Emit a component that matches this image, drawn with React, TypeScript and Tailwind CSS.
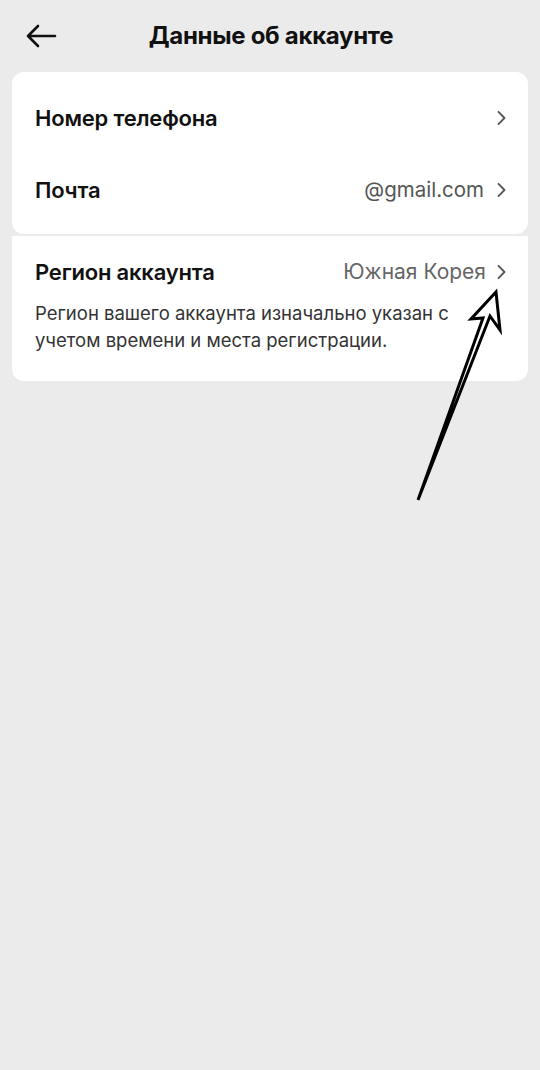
import React from "react";

const Chevron = () => (
  <svg width="12" height="16" viewBox="0 0 12 16" fill="none" className="shrink-0">
    <path d="M3.5 1.8 L9.5 8 L3.5 14.2" stroke="#555" strokeWidth="1.8" strokeLinecap="round" strokeLinejoin="round" />
  </svg>
);

export default function App() {
  return (
    <div className="relative w-[540px] h-[1070px] bg-[#ebebeb] overflow-hidden" style={{ fontFamily: "Inter, 'Noto Sans', sans-serif" }}>
      <div className="h-[72px] flex items-center relative">
        <svg width="32" height="24" viewBox="0 0 32 24" fill="none" className="absolute left-[25px] top-[24px]">
          <path d="M30 12 H3 M13 2 L3 12 L13 22" stroke="#111" strokeWidth="2.6" strokeLinecap="round" strokeLinejoin="round" />
        </svg>
        <div className="w-full text-center text-[24px] font-bold text-[#111] tracking-[-0.3px] pl-[2px]">Данные об аккаунте</div>
      </div>
      <div className="mx-[12px] bg-white rounded-[12px] pt-[10px] pb-[8px]">
        <div className="h-[72px] flex items-center justify-between pl-[23px] pr-[21px]">
          <span className="text-[22px] font-semibold text-[#111] tracking-[-0.2px]">Номер телефона</span>
          <Chevron />
        </div>
        <div className="h-[72px] flex items-center justify-between pl-[23px] pr-[21px]">
          <span className="text-[22px] font-semibold text-[#111] tracking-[-0.2px]">Почта</span>
          <div className="flex items-center gap-[11px]">
            <span className="text-[20.5px] text-[#555]">@gmail.com</span>
            <Chevron />
          </div>
        </div>
      </div>
      <div className="mx-[12px] mt-[2px] bg-white rounded-b-[12px] pt-[22px] pb-[27px] pl-[23px] pr-[21px]">
        <div className="h-[28px] flex items-center justify-between">
          <span className="text-[22px] font-semibold text-[#111] tracking-[-0.2px]">Регион аккаунта</span>
          <div className="flex items-center gap-[9px]">
            <span className="text-[21px] text-[#666]">Южная Корея</span>
            <Chevron />
          </div>
        </div>
        <p className="mt-[14px] text-[18.5px] leading-[27px] text-[#333] pr-[40px]">Регион вашего аккаунта изначально указан с учетом времени и места регистрации.</p>
      </div>
      <svg className="absolute left-0 top-0 pointer-events-none" width="540" height="1070" viewBox="0 0 540 1070" fill="none">
        <path d="M496 292 L500 330 L490 316 L418 500 L483 318 L471 319 Z" stroke="#000" strokeWidth="3" strokeLinejoin="miter" />
      </svg>
    </div>
  );
}
